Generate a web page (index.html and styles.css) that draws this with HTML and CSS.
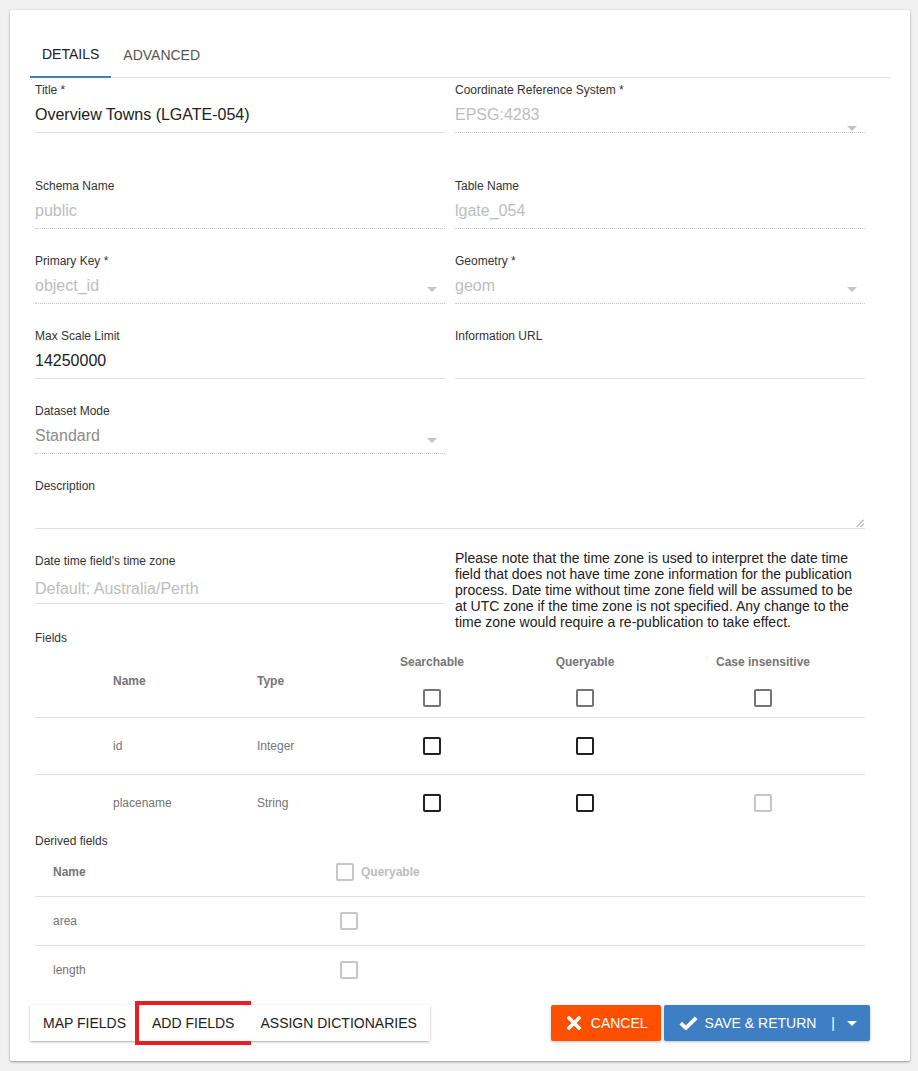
FILE: index.html
```html
<!DOCTYPE html>
<html lang="en">
<head>
<meta charset="utf-8">
<title>Dataset</title>
<link rel="stylesheet" href="styles.css">
</head>
<body>
<div class="card">
  <div class="tabs">
    <div class="tab active">Details</div>
    <div class="tab">Advanced</div>
  </div>

  <div class="form">
    <div class="row row-first">
      <div class="field">
        <span class="lbl">Title *</span>
        <div class="input"><span class="val">Overview Towns (LGATE-054)</span></div>
      </div>
      <div class="field">
        <span class="lbl">Coordinate Reference System *</span>
        <div class="input disabled"><span class="val muted">EPSG:4283</span><span class="caret caret-low"></span></div>
      </div>
    </div>

    <div class="row">
      <div class="field">
        <span class="lbl">Schema Name</span>
        <div class="input disabled"><span class="val muted">public</span></div>
      </div>
      <div class="field">
        <span class="lbl">Table Name</span>
        <div class="input disabled"><span class="val muted">lgate_054</span></div>
      </div>
    </div>

    <div class="row">
      <div class="field">
        <span class="lbl">Primary Key *</span>
        <div class="input disabled"><span class="val muted">object_id</span><span class="caret"></span></div>
      </div>
      <div class="field">
        <span class="lbl">Geometry *</span>
        <div class="input disabled"><span class="val muted">geom</span><span class="caret"></span></div>
      </div>
    </div>

    <div class="row">
      <div class="field">
        <span class="lbl">Max Scale Limit</span>
        <div class="input"><span class="val">14250000</span></div>
      </div>
      <div class="field">
        <span class="lbl">Information URL</span>
        <div class="input"><span class="val"></span></div>
      </div>
    </div>

    <div class="row">
      <div class="field">
        <span class="lbl">Dataset Mode</span>
        <div class="input disabled"><span class="val grey">Standard</span><span class="caret caret-mid"></span></div>
      </div>
    </div>

    <div class="row row-full">
      <div class="field">
        <span class="lbl">Description</span>
        <div class="input textarea">
          <span class="val"></span>
          <svg class="grip" width="8" height="8" viewBox="0 0 8 8"><path d="M8 0.5L0.5 8M8 4.5L4.5 8" stroke="#8a8a8a" stroke-width="1"/></svg>
        </div>
      </div>
    </div>

    <div class="row row-tz">
      <div class="field">
        <span class="lbl">Date time field's time zone</span>
        <div class="input"><span class="val muted placeholder">Default: Australia/Perth</span></div>
      </div>
      <p class="note">Please note that the time zone is used to interpret the date time field that does not have time zone information for the publication process. Date time without time zone field will be assumed to be at UTC zone if the time zone is not specified. Any change to the time zone would require a re-publication to take effect.</p>
    </div>

    <div class="section-label">Fields</div>
    <div class="ftable">
      <div class="tr th">
        <div class="td"></div>
        <div class="td">Name</div>
        <div class="td">Type</div>
        <div class="td cbcell stack"><span>Searchable</span><span class="cb cb-head"></span></div>
        <div class="td cbcell stack"><span>Queryable</span><span class="cb cb-head"></span></div>
        <div class="td cbcell stack"><span>Case insensitive</span><span class="cb cb-head"></span></div>
      </div>
      <div class="tr">
        <div class="td"></div>
        <div class="td">id</div>
        <div class="td">Integer</div>
        <div class="td cbcell"><span class="cb"></span></div>
        <div class="td cbcell"><span class="cb"></span></div>
        <div class="td cbcell"></div>
      </div>
      <div class="tr last">
        <div class="td"></div>
        <div class="td">placename</div>
        <div class="td">String</div>
        <div class="td cbcell"><span class="cb"></span></div>
        <div class="td cbcell"><span class="cb"></span></div>
        <div class="td cbcell"><span class="cb cb-off"></span></div>
      </div>
    </div>

    <div class="section-label derived-label">Derived fields</div>
    <div class="dtable">
      <div class="dr dh">
        <div class="dname">Name</div>
        <div class="dq dq-head"><span class="cb cb-off"></span><span class="qlabel">Queryable</span></div>
      </div>
      <div class="dr">
        <div class="dname">area</div>
        <div class="dq"><span class="cb cb-off"></span></div>
      </div>
      <div class="dr last">
        <div class="dname">length</div>
        <div class="dq"><span class="cb cb-off"></span></div>
      </div>
    </div>
  </div>

  <div class="actions">
    <div class="btn-group">
      <button class="gbtn">Map Fields</button>
      <button class="gbtn highlight">Add Fields</button>
      <button class="gbtn">Assign Dictionaries</button>
    </div>
    <div class="right-actions">
      <button class="btn btn-cancel">
        <svg width="14" height="14" viewBox="0 0 14 14"><path d="M2 2L12 12M12 2L2 12" stroke="#fff" stroke-width="3.6" stroke-linecap="square"/></svg>
        <span>Cancel</span>
      </button>
      <button class="btn btn-save">
        <svg width="19" height="14" viewBox="0 0 19 14"><path d="M1.8 7.2L6.8 12L17.2 1.8" fill="none" stroke="#fff" stroke-width="3.8"/></svg>
        <span class="save-text">Save &amp; Return</span>
        <span class="sep">|</span>
        <span class="wcaret"></span>
      </button>
    </div>
  </div>
</div>
</body>
</html>
```

FILE: styles.css
```css
html, body {
  margin: 0;
  padding: 0;
}
body {
  background: #f0f0f0;
  font-family: "Liberation Sans", Arial, sans-serif;
  color: #212121;
}
.card {
  margin: 10px;
  width: 900px;
  height: 1051px;
  box-sizing: border-box;
  background: #fff;
  border-radius: 2px;
  box-shadow: 0 1px 3px rgba(0,0,0,0.28), 0 1px 1px rgba(0,0,0,0.12);
  padding: 21px 20px 20px 20px;
}

/* Tabs */
.tabs {
  display: flex;
  height: 47px;
  box-sizing: border-box;
  border-bottom: 1px solid #e0e0e0;
}
.tab {
  height: 47px;
  box-sizing: border-box;
  margin-bottom: -1px;
  padding: 0 12px;
  display: flex;
  align-items: center;
  font-size: 14px;
  text-transform: uppercase;
  color: #555;
}
.tab.active {
  color: #212121;
  border-bottom: 2px solid #3d7fc2;
}

/* Form */
.form {
  margin: 5px 25px 0 5px;
}
.row {
  display: grid;
  grid-template-columns: 410px 410px;
  column-gap: 10px;
  margin-bottom: 25px;
}
.row-first {
  margin-bottom: 46px;
}
.row-full {
  grid-template-columns: 830px;
}
.row-tz {
  margin-bottom: 1px;
  align-items: start;
}
.lbl {
  display: block;
  font-size: 12px;
  line-height: 14px;
  height: 14px;
  color: #333;
}
.input {
  margin-top: 8px;
  height: 27px;
  border-bottom: 1px solid #e0e0e0;
  display: flex;
  align-items: flex-start;
  font-size: 16px;
  line-height: 20px;
  color: #212121;
}
.input.disabled {
  border-bottom: 1px dotted #c6c6c6;
}
.val {
  flex: 1;
  white-space: nowrap;
}
.placeholder {
  padding-top: 3px;
}
.muted {
  color: #bdbdbd;
}
.grey {
  color: #8c8c8c;
}
.caret {
  width: 0;
  height: 0;
  border-left: 5px solid transparent;
  border-right: 5px solid transparent;
  border-top: 5px solid #c4c4c4;
  margin: 11px 8px 0 0;
}
.caret-low {
  margin-top: 21px;
}
.caret-mid {
  margin-top: 12px;
}
.textarea {
  align-items: flex-end;
}
.grip {
  display: block;
  margin: 0 1px 1px 0;
}
.note {
  margin: -4px 0 0 0;
  font-size: 14px;
  line-height: 16px;
  color: #212121;
}

.section-label {
  font-size: 12px;
  line-height: 14px;
  height: 14px;
  color: #333;
}
.derived-label {
  margin-top: 3px;
  margin-bottom: 0;
}

/* Fields table */
.ftable .tr {
  display: grid;
  grid-template-columns: 78px 144px 98px 154px 152px 204px;
  height: 57px;
  box-sizing: border-box;
  border-bottom: 1px solid #e0e0e0;
  align-items: center;
  font-size: 12px;
  color: #757575;
}
.ftable .tr.th {
  height: 73px;
  font-weight: bold;
}
.ftable .tr.last {
  height: 56px;
  border-bottom: none;
}
.cbcell {
  display: flex;
  justify-content: center;
  align-items: center;
}
.cbcell.stack {
  flex-direction: column;
  gap: 20px;
  line-height: 14px;
}
.cb {
  display: block;
  width: 18px;
  height: 18px;
  box-sizing: border-box;
  border: 2px solid #212121;
  border-radius: 2px;
}
.cb-head {
  border-color: #757575;
}
.cb-off {
  border-color: #c6c6c6;
}

/* Derived table */
.dtable .dr {
  display: grid;
  grid-template-columns: 300px 530px;
  height: 49px;
  box-sizing: border-box;
  border-bottom: 1px solid #e0e0e0;
  align-items: center;
  font-size: 12px;
  color: #757575;
}
.dtable .dr.last {
  height: 48px;
  border-bottom: none;
}
.dname {
  padding-left: 18px;
}
.dh .dname {
  font-weight: bold;
}
.dq {
  display: flex;
  align-items: center;
  padding-left: 5px;
}
.dq-head {
  padding-left: 1px;
  gap: 7px;
}
.qlabel {
  font-weight: bold;
  color: #bdbdbd;
}

/* Actions */
.actions {
  display: flex;
  justify-content: space-between;
  margin: 11px 20px 0 0;
}
.btn-group {
  display: flex;
  background: #fff;
  border-radius: 2px;
  box-shadow: 0 1px 3px rgba(0,0,0,0.25), 0 1px 1px rgba(0,0,0,0.1);
}
button {
  font-family: "Liberation Sans", Arial, sans-serif;
  font-size: 14px;
  text-transform: uppercase;
  border: none;
  margin: 0;
  cursor: pointer;
  white-space: nowrap;
}
.gbtn {
  height: 36px;
  padding: 0 13px;
  background: #fff;
  color: #212121;
}
.gbtn.highlight {
  outline: 4px solid #ec1c24;
}
.right-actions {
  display: flex;
  gap: 3px;
}
.btn {
  height: 36px;
  display: flex;
  align-items: center;
  color: #fff;
  border-radius: 2px;
  box-shadow: 0 1px 3px rgba(0,0,0,0.25);
}
.btn svg {
  display: block;
  flex: none;
}
.btn-cancel {
  background: #ff5000;
  padding: 0 13px 0 16px;
  gap: 10px;
}
.btn-save {
  background: #3d7fc2;
  padding: 0 13px 0 15px;
}
.save-text {
  margin-left: 7px;
}
.sep {
  margin-left: 15px;
}
.wcaret {
  width: 0;
  height: 0;
  border-left: 5px solid transparent;
  border-right: 5px solid transparent;
  border-top: 5px solid #fff;
  margin-left: 12px;
}
```
